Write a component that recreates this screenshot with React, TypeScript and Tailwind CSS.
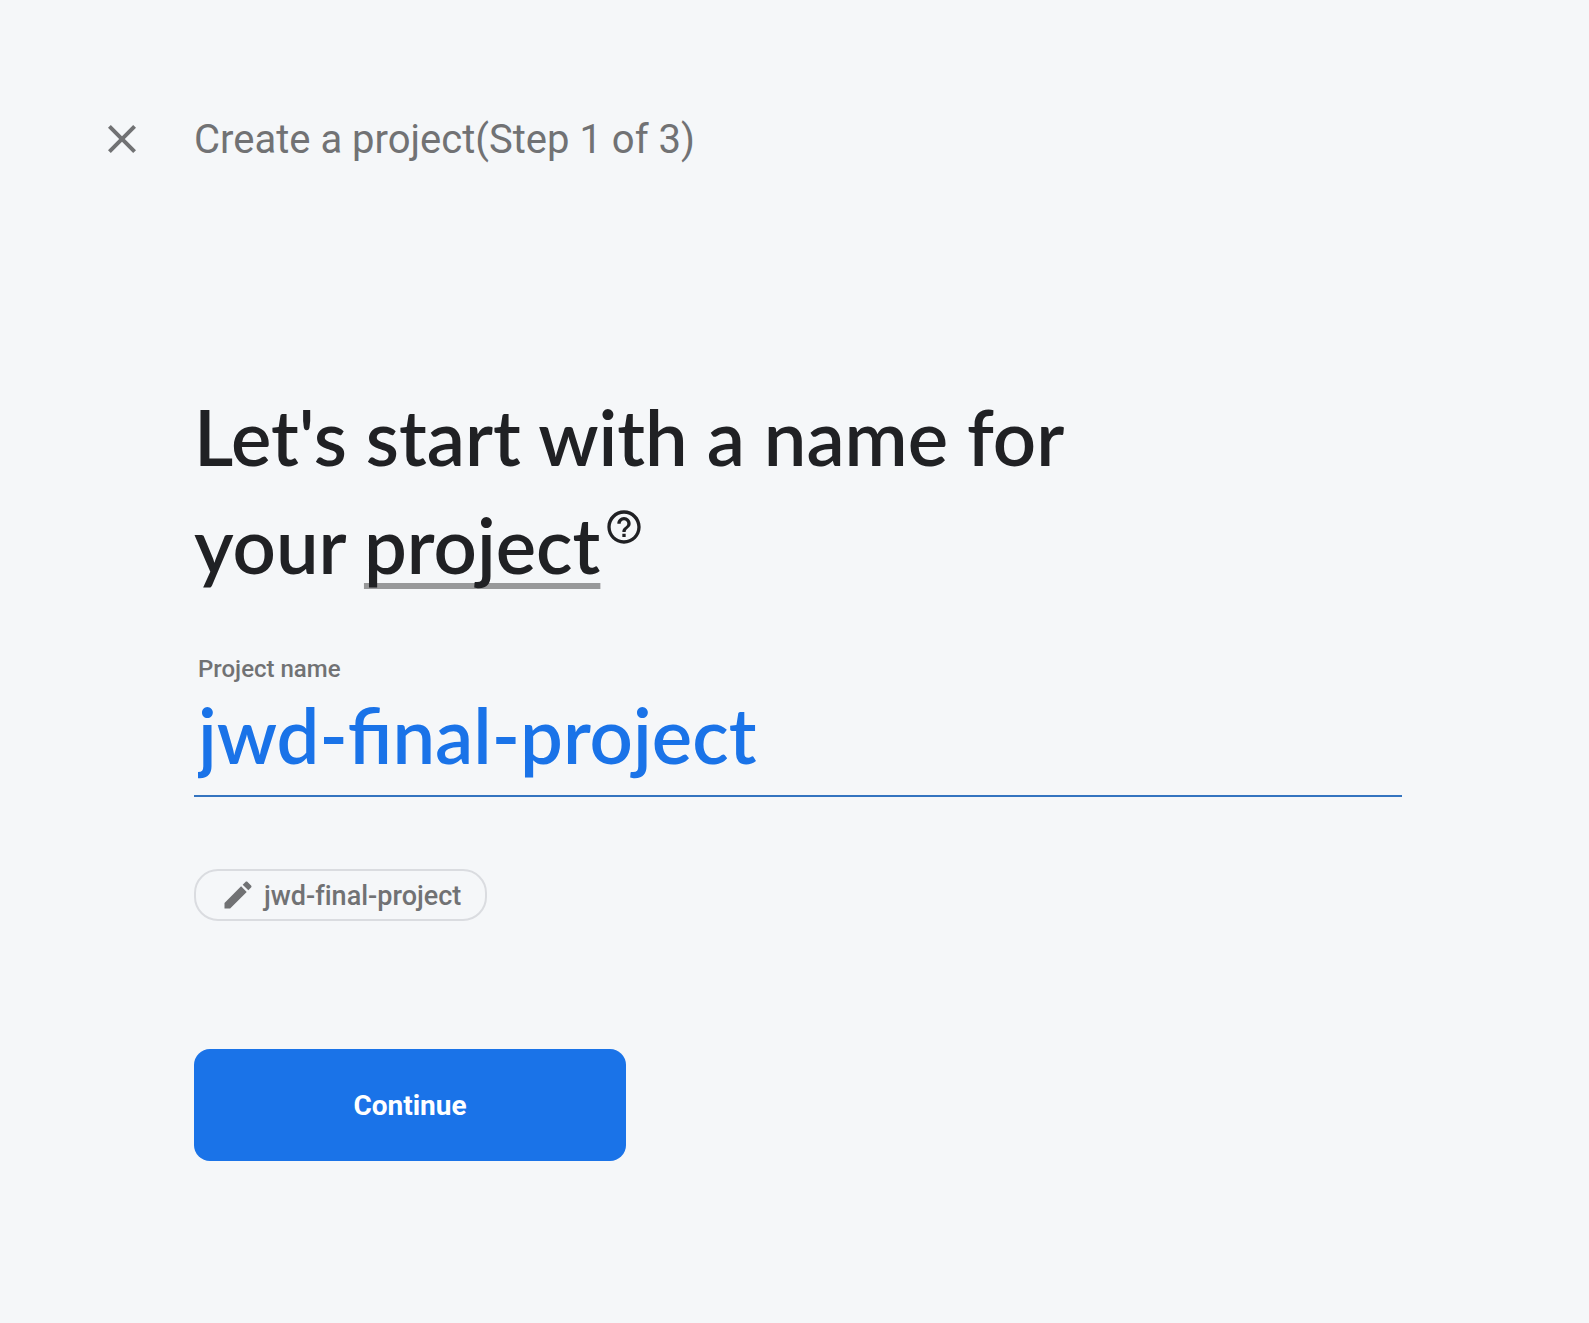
import { useState } from "react";

function CloseIcon() {
  return (
    <svg viewBox="0 0 24 24" className="size-12 fill-current" aria-hidden="true">
      <path d="M19 6.41 17.59 5 12 10.59 6.41 5 5 6.41 10.59 12 5 17.59 6.41 19 12 13.41 17.59 19 19 17.59 13.41 12z" />
    </svg>
  );
}

function HelpIcon() {
  return (
    <svg viewBox="0 0 24 24" className="size-10 fill-current" aria-hidden="true">
      <path d="M11 18h2v-2h-2v2zm1-16C6.48 2 2 6.48 2 12s4.48 10 10 10 10-4.480 10-10S17.520 2 12 2zm0 18c-4.410 0-8-3.590-8-8s3.590-8 8-8 8 3.590 8 8-3.590 8-8 8zm0-14c-2.210 0-4 1.790-4 4h2c0-1.100.9-2 2-2s2 .9 2 2c0 2-3 1.750-3 5h2c0-2.250 3-2.500 3-5 0-2.210-1.790-4-4-4z" />
    </svg>
  );
}

function PencilIcon() {
  return (
    <svg viewBox="0 0 24 24" className="size-9 fill-current" aria-hidden="true">
      <path d="M3 17.250V21h3.750L17.810 9.940l-3.750-3.750L3 17.250zM20.710 7.040c.39-.39.39-1.020 0-1.410l-2.340-2.340c-.39-.39-1.020-.39-1.410 0l-1.830 1.830 3.750 3.750 1.830-1.830z" />
    </svg>
  );
}

export default function App() {
  const [name, setName] = useState("jwd-final-project");

  return (
    <div className="min-h-screen bg-[#f5f7f9] pt-[108px] pb-20 font-['Roboto',sans-serif] text-[#717274]">
      <header className="flex items-center gap-12 pl-[98px]">
        <button type="button" aria-label="Close">
          <CloseIcon />
        </button>
        <p className="pt-0.5 text-[40px] leading-[60px]">Create a project(Step 1 of 3)</p>
      </header>

      <main className="pt-[213px] pr-[187px] pl-[194px]">
        <h1 className="font-['Lato',sans-serif] text-[76px] leading-[108px] font-semibold text-[#202124]">
          <span className="block">Let's start with a name for</span>
          <span className="flex items-start">
            <span className="whitespace-pre">{"your "}</span>
            <span className="underline decoration-[#98999a] decoration-[6px] underline-offset-[9px] [text-decoration-skip-ink:none]">
              project
            </span>
            <button type="button" aria-label="What is a project?" className="ml-1 pt-4">
              <HelpIcon />
            </button>
          </span>
        </h1>

        <form onSubmit={(e) => e.preventDefault()}>
          <label htmlFor="project-name" className="mt-[54px] block pl-1 text-[24px] leading-8 font-medium">
            Project name
          </label>
          <input
            id="project-name"
            value={name}
            onChange={(e) => setName(e.target.value)}
            className="block h-[112px] w-full border-b-2 border-[#3474c0] bg-transparent pb-2.5 pl-1 font-['Lato',sans-serif] text-[76px] font-semibold text-[#1a73e8] outline-none"
          />
          <button
            type="button"
            className="mt-[72px] flex h-[52px] items-center gap-2 rounded-3xl border-2 border-[#dadce0] px-6 text-[27px] font-medium [font-variant-ligatures:none]"
          >
            <PencilIcon />
            <span className="pt-0.5">{name}</span>
          </button>
          <button
            type="submit"
            className="mt-32 block h-28 w-[432px] rounded-2xl bg-[#1a73e8] pt-0.5 text-[28px] font-bold text-white"
          >
            Continue
          </button>
        </form>
      </main>
    </div>
  );
}
